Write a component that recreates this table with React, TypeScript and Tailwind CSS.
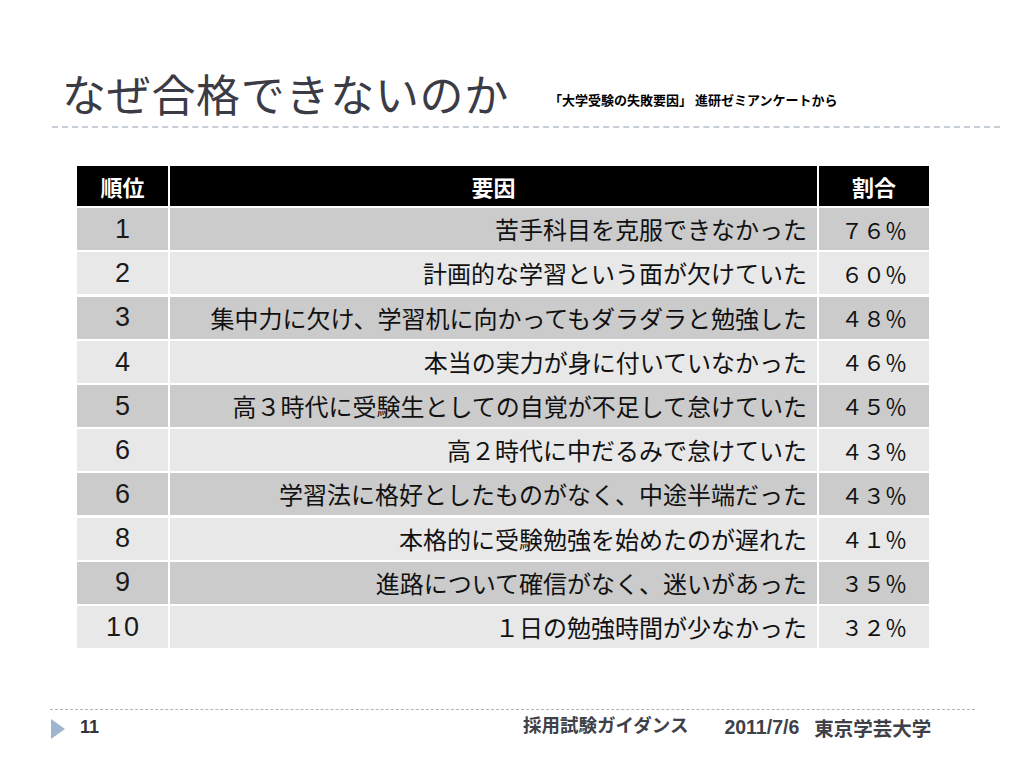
import React from 'react';

const rows = [
  { rank: '1', reason: '苦手科目を克服できなかった', pct: '７６％' },
  { rank: '2', reason: '計画的な学習という面が欠けていた', pct: '６０％' },
  { rank: '3', reason: '集中力に欠け、学習机に向かってもダラダラと勉強した', pct: '４８％' },
  { rank: '4', reason: '本当の実力が身に付いていなかった', pct: '４６％' },
  { rank: '5', reason: '高３時代に受験生としての自覚が不足して怠けていた', pct: '４５％' },
  { rank: '6', reason: '高２時代に中だるみで怠けていた', pct: '４３％' },
  { rank: '6', reason: '学習法に格好としたものがなく、中途半端だった', pct: '４３％' },
  { rank: '8', reason: '本格的に受験勉強を始めたのが遅れた', pct: '４１％' },
  { rank: '9', reason: '進路について確信がなく、迷いがあった', pct: '３５％' },
  { rank: '10', reason: '１日の勉強時間が少なかった', pct: '３２％' },
];

export default function App() {
  return (
    <div className="w-[1024px] h-[768px] bg-white flex flex-col font-['Noto_Sans_CJK_JP',sans-serif] text-[#111]">
      {/* Title */}
      <div className="flex items-end pl-[62px] pt-[71px]">
        <h1 className="text-[44px] leading-none font-normal text-[#3b3b45] tracking-[0.7px]">なぜ合格できないのか</h1>
        <span className="ml-[40px] mb-[9px] text-[13px] leading-none font-bold text-black">「大学受験の失敗要因」 進研ゼミアンケートから</span>
      </div>
      <div className="ml-[52px] mr-[24px] mt-[11px] border-t-2 border-dashed border-[#c8ced6]" />

      {/* Table */}
      <div className="ml-[77px] mt-[38px] w-[852px] grid grid-cols-[91px_647px_110px] gap-x-[2px] gap-y-[2.2px]">
        <div className="h-[40px] bg-black text-white font-bold text-[22px] flex items-center justify-center">順位</div>
        <div className="h-[40px] bg-black text-white font-bold text-[22px] flex items-center justify-center">要因</div>
        <div className="h-[40px] bg-black text-white font-bold text-[22px] flex items-center justify-center">割合</div>
        {rows.map((r, i) => {
          const bg = i % 2 === 0 ? 'bg-[#cbcbcb]' : 'bg-[#e8e8e8]';
          return (
            <React.Fragment key={i}>
              <div className={`h-[42px] ${bg} flex items-center justify-center pl-[3px] text-[27px] tracking-[3px] text-[#1a1a1a] font-['Liberation_Sans',sans-serif]`}>{r.rank}</div>
              <div className={`h-[42px] ${bg} flex items-center justify-end pr-[10px] text-[24px] whitespace-nowrap`}>{r.reason}</div>
              <div className={`h-[42px] ${bg} flex items-center justify-center text-[22px]`}>{r.pct}</div>
            </React.Fragment>
          );
        })}
      </div>

      {/* Footer */}
      <div className="ml-[50px] mr-[49px] mt-[61px] border-t border-dashed border-[#a9b6c4]" />
      <div className="flex items-start pl-[51px]">
        <svg width="14" height="20" viewBox="0 0 14 20" className="mt-[9px]">
          <polygon points="0,0 14,10 0,20" fill="#9fb5cf" />
        </svg>
        <span className="ml-[15px] mt-[8px] w-[20px] text-[18px] leading-none font-bold text-[#333340] font-['Liberation_Sans',sans-serif]">11</span>
        <span className="ml-[423px] mt-[5px] text-[18.5px] leading-none font-bold text-[#404048]">採用試験ガイダンス</span>
        <span className="ml-[36px] mt-[8px] text-[19.5px] leading-none font-bold text-[#404048] font-['Liberation_Sans',sans-serif]">2011/7/6</span>
        <span className="ml-[15px] mt-[8px] text-[19.5px] leading-none font-bold text-[#404048]">東京学芸大学</span>
      </div>
    </div>
  );
}
